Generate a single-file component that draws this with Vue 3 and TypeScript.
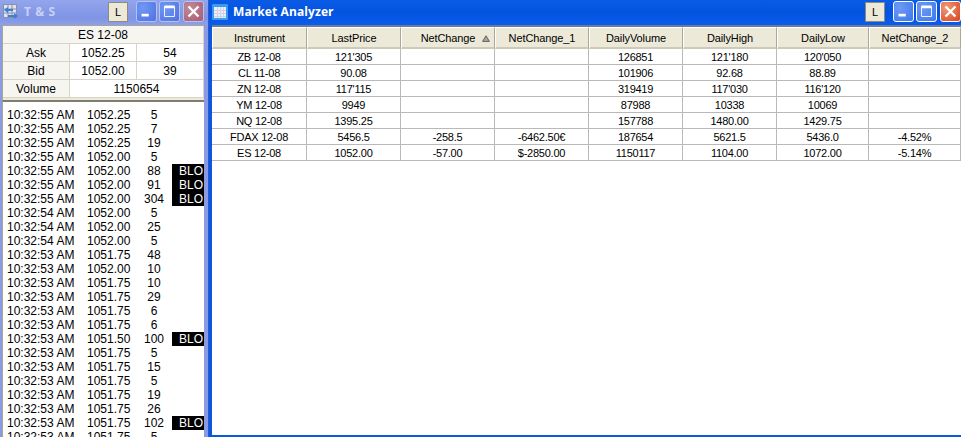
<script setup lang="ts">
const headers = ['Instrument', 'LastPrice', 'NetChange', 'NetChange_1', 'DailyVolume', 'DailyHigh', 'DailyLow', 'NetChange_2']
const market: string[][] = [
  ['ZB 12-08', "121'305", '', '', '126851', "121'180", "120'050", ''],
  ['CL 11-08', '90.08', '', '', '101906', '92.68', '88.89', ''],
  ['ZN 12-08', "117'115", '', '', '319419', "117'030", "116'120", ''],
  ['YM 12-08', '9949', '', '', '87988', '10338', '10069', ''],
  ['NQ 12-08', '1395.25', '', '', '157788', '1480.00', '1429.75', ''],
  ['FDAX 12-08', '5456.5', '-258.5', '-6462.50€', '187654', '5621.5', '5436.0', '-4.52%'],
  ['ES 12-08', '1052.00', '-57.00', '$-2850.00', '1150117', '1104.00', '1072.00', '-5.14%'],
]
type Tick = [string, string, number, boolean?]
const ticks: Tick[] = [
  ['55', '1052.25', 5], ['55', '1052.25', 7], ['55', '1052.25', 19], ['55', '1052.00', 5],
  ['55', '1052.00', 88, true], ['55', '1052.00', 91, true], ['55', '1052.00', 304, true],
  ['54', '1052.00', 5], ['54', '1052.00', 25], ['54', '1052.00', 5],
  ['53', '1051.75', 48], ['53', '1052.00', 10], ['53', '1051.75', 10], ['53', '1051.75', 29],
  ['53', '1051.75', 6], ['53', '1051.75', 6], ['53', '1051.50', 100, true], ['53', '1051.75', 5],
  ['53', '1051.75', 15], ['53', '1051.75', 5], ['53', '1051.75', 19], ['53', '1051.75', 26],
  ['53', '1051.75', 102, true], ['53', '1051.75', 5],
]
</script>

<template>
  <div class="desk">
    <section class="win inactive">
      <header class="bar">
        <svg class="ico" viewBox="0 0 16 16" width="16" height="16">
          <rect x="0.5" y="0.5" width="13" height="13" fill="#dfe3f0" stroke="#8a90a8" />
          <path d="M0 5h14M0 9h14M5 0v14M9 0v14" stroke="#8a90a8" />
          <path d="M5 11h6V9l4 3-4 3v-2H5z" fill="#3a7fd8" />
          <path d="M10 5H5V3L1 6l4 3V7h5z" fill="#3a7fd8" />
        </svg>
        <span class="title">T &amp; S</span>
        <button class="l">L</button>
        <span class="tb tb-first">
          <svg viewBox="0 0 21 21"><rect x="5" y="13" width="8" height="3" fill="#fff" /></svg>
        </span>
        <span class="tb">
          <svg viewBox="0 0 21 21"><path d="M5 5h11v11H5z" fill="none" stroke="#fff" /><path d="M5 5.5h11" stroke="#fff" stroke-width="3" /></svg>
        </span>
        <span class="tb close">
          <svg viewBox="0 0 21 21"><path d="M5 5l11 11M16 5L5 16" stroke="#fff" stroke-width="2.6" /></svg>
        </span>
      </header>
      <div class="quote">
        <div class="q head">ES 12-08</div>
        <div class="q label">Ask</div><div class="q">1052.25</div><div class="q">54</div>
        <div class="q label">Bid</div><div class="q">1052.00</div><div class="q">39</div>
        <div class="q label">Volume</div><div class="q wide">1150654</div>
      </div>
      <div class="tape">
        <div v-for="(t, i) in ticks" :key="i" class="tick">
          <span class="time">10:32:{{ t[0] }} AM</span>
          <span class="price">{{ t[1] }}</span>
          <span class="size">{{ t[2] }}</span>
          <span v-if="t[3]" class="blo">BLO</span>
        </div>
      </div>
    </section>

    <section class="win active">
      <header class="bar">
        <svg class="ico" viewBox="0 0 16 16" width="16" height="16">
          <rect x="0" y="0" width="16" height="16" rx="1" fill="#3a9cf0" />
          <rect x="2" y="3" width="12" height="11" fill="#eeeef8" />
          <path d="M2 6.5h12M2 9.5h12M2 12.5h12M5.5 3v11M8.5 3v11M11.5 3v11" stroke="#d0d0e8" />
        </svg>
        <span class="title">Market Analyzer</span>
        <button class="l">L</button>
        <span class="tb tb-first">
          <svg viewBox="0 0 21 21"><rect x="5" y="13" width="8" height="3" fill="#fff" /></svg>
        </span>
        <span class="tb">
          <svg viewBox="0 0 21 21"><path d="M5 5h11v11H5z" fill="none" stroke="#fff" /><path d="M5 5.5h11" stroke="#fff" stroke-width="3" /></svg>
        </span>
        <span class="tb close">
          <svg viewBox="0 0 21 21"><path d="M5 5l11 11M16 5L5 16" stroke="#fff" stroke-width="2.6" /></svg>
        </span>
      </header>
      <div class="sheet">
        <div class="grid">
          <div v-for="h in headers" :key="h" class="th" :class="{ sorted: h === 'NetChange' }">
            {{ h }}<svg v-if="h === 'NetChange'" class="sort" viewBox="0 0 8 7" width="8" height="7"><path d="M4 .8L7.4 6.4H.6z" fill="#aca899" stroke="#555" stroke-width=".9" /></svg>
          </div>
          <template v-for="(row, r) in market" :key="r">
            <div v-for="(c, i) in row" :key="i" class="td">{{ c }}</div>
          </template>
        </div>
      </div>
    </section>
  </div>
</template>

<style>
html, body { margin: 0; overflow: hidden; }
</style>

<style scoped>
.desk {
  width: 961px;
  height: 437px;
  display: flex;
  overflow: hidden;
  background: #fff;
  font-family: "Liberation Sans", Arial, sans-serif;
  font-size: 11px;
  color: #000;
}
.win {
  height: 437px;
  display: flex;
  flex-direction: column;
  box-sizing: border-box;
}
.inactive {
  width: 208px;
  flex: none;
  padding: 0 4px 0 2px;
  background: #8a9be3;
  --btn: #4f70e0;
}
.active {
  flex: 1;
  padding: 0 0 2px 3px;
  background: #0a57e0;
  --btn: #3c78ea;
  border-left: 1px solid #3a55c8;
}
.bar {
  height: 25px;
  flex: none;
  display: flex;
  align-items: center;
}
.inactive .bar {
  background: linear-gradient(#93a5ec, #7f94e4 70%, #8fa0e8);
  margin: 0 -4px 0 -2px;
  padding: 0 4px 2px 3px;
  box-sizing: border-box;
}
.active .bar {
  background: linear-gradient(#0a5be6, #0353e0 50%, #0a5cea);
  margin: 0 0 0 -3px;
  padding: 0 0 2px 3px;
  box-sizing: border-box;
}
.ico { flex: none; margin-right: 5px; }
.title {
  flex: 1;
  font-family: "Open Sans", sans-serif;
  font-weight: 700;
  font-size: 12px;
  letter-spacing: 0.1px;
  color: #fff;
  white-space: nowrap;
}
.inactive .title { color: #c8d2f4; letter-spacing: 0.6px; }
.l {
  width: 20px;
  height: 20px;
  flex: none;
  box-sizing: border-box;
  padding: 0;
  border: 1px solid #8e8b7c;
  background: #ece9d8;
  font: 11px "Liberation Sans", sans-serif;
  color: #000;
}
.tb {
  width: 21px;
  height: 21px;
  flex: none;
  box-sizing: border-box;
  margin-left: 2px;
  border: 1px solid #fff;
  border-radius: 3px;
  background: radial-gradient(circle at 30% 30%, #6f99f5, var(--btn));
  overflow: hidden;
  display: block;
}
.tb-first { margin-left: 8px; }
.inactive .tb { border-color: #b6c2f2; }
.tb svg { display: block; width: 19px; height: 19px; }
.close { margin-left: 3px; background: radial-gradient(circle at 30% 30%, #f09a78, #d8441c); }
.inactive .close { background: radial-gradient(circle at 30% 30%, #c08a98, #a85a70); }

.quote {
  flex: none;
  display: grid;
  grid-template-columns: 67px 67px 67px;
  grid-auto-rows: 18px;
  background: #ece9d8;
  border-top: 1px solid #a8a597;
  border-left: 1px solid #a8a597;
  box-sizing: border-box;
  height: 75px;
  width: 202px;
  padding-bottom: 2px;
}
.q {
  display: flex;
  align-items: center;
  justify-content: center;
  box-sizing: border-box;
  padding-top: 1px;
  font-size: 12px;
  background: #fff;
  border-right: 1px solid #d6d3c8;
  border-bottom: 1px solid #d6d3c8;
}
.head { grid-column: span 3; background: #f6f5f0; }
.label { background: #f6f5f0; }
.wide { grid-column: span 2; }
.tape {
  flex: 1;
  width: 202px;
  min-height: 0;
  overflow: hidden;
  background: #fff;
  border-top: 2px solid #7f7d70;
  border-left: 1px solid #a8a597;
  box-sizing: border-box;
  padding-top: 6px;
}
.tick {
  height: 14px;
  line-height: 14px;
  display: flex;
  font-size: 12px;
  white-space: nowrap;
}
.time { width: 80px; margin-left: 4px; flex: none; }
.price { width: 54px; flex: none; }
.size { width: 26px; flex: none; text-align: center; }
.blo {
  width: 32px;
  margin-left: 5px;
  flex: none;
  box-sizing: border-box;
  background: #000;
  color: #fff;
  text-align: right;
  padding-right: 1px;
}
.sheet {
  flex: 1;
  background: #fff;
  border-top: 2px solid #6d7a9c;
  box-sizing: border-box;
}
.grid {
  display: grid;
  grid-template-columns: 95px repeat(5, 94px) 92px 92px;
  grid-template-rows: 22px;
  grid-auto-rows: 16px;
  width: 749px;
}
.th {
  box-sizing: border-box;
  background: #ece9d8;
  border-right: 1px solid #aca899;
  border-bottom: 2px solid #cdcabb;
  border-top: 1px solid #fff;
  border-left: 1px solid #fff;
  display: flex;
  align-items: center;
  justify-content: center;
  padding-top: 1px;
  font-size: 11px;
  letter-spacing: -0.1px;
}
.sorted { padding-left: 15px; }
.sort { margin-left: 7px; }
.td {
  box-sizing: border-box;
  display: flex;
  align-items: center;
  justify-content: center;
  font-size: 11px;
  letter-spacing: -0.25px;
  border-right: 1px solid #b9b9b9;
  border-bottom: 1px solid #b9b9b9;
  white-space: nowrap;
}
</style>
